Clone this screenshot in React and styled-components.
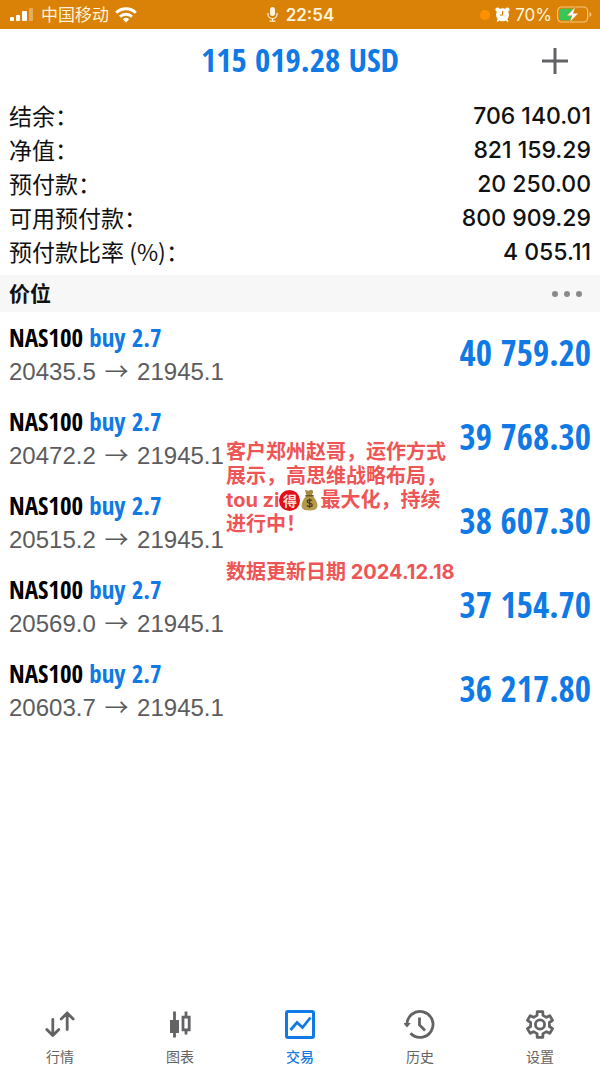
import React from "react";
import styled, { createGlobalStyle } from "styled-components";

const BLUE = "#0f7ae5";
const GREY = "#636366";
const CJK = `"Noto Sans CJK SC", sans-serif`;
const CONDENSED = `"Open Sans Condensed", "Roboto Condensed", sans-serif`;

const Global = createGlobalStyle`
  * { box-sizing: border-box; }
  body { margin: 0; background: #fff; color: #111; font-family: Inter, ${CJK}; }
  h1, h2, p, dl, dd, ul { margin: 0; padding: 0; }
  button { border: 0; padding: 0; background: none; cursor: pointer; }
  svg { display: block; flex: none; }
`;

const Page = styled.div`
  display: flex;
  flex-direction: column;
  min-height: 100vh;
`;

const StatusBar = styled.header`
  display: grid;
  grid-template-columns: 1fr auto 1fr;
  align-items: center;
  height: 29px;
  padding: 0 8px 0 9px;
  background: #d98207;
  color: #fff3dc;
`;

const StatusGroup = styled.div`
  display: flex;
  align-items: center;
  justify-content: ${(p) => p.$align || "flex-start"};
  gap: ${(p) => p.$gap || 6}px;
  font: ${(p) => (p.$strong ? 600 : 400)} 17px/24px Inter, ${CJK};
`;

const RecordingDot = styled.span`
  width: 10px;
  height: 10px;
  border-radius: 50%;
  background: #ff9100;
`;

const TitleBar = styled.div`
  display: grid;
  grid-template-columns: 1fr auto 1fr;
  align-items: center;
  height: 63px;
  padding: 0 31px;
`;

const Profit = styled.h1`
  grid-column: 2;
  padding-bottom: 2px;
  color: ${BLUE};
  font: 600 33px/40px ${CONDENSED};
  white-space: nowrap;
`;

const AddButton = styled.button`
  justify-self: end;
  color: ${GREY};
`;

const Summary = styled.dl`
  display: flex;
  flex-direction: column;
  padding: 6px 9px 7px;
`;

const SummaryRow = styled.div`
  display: flex;
  align-items: flex-start;
  justify-content: space-between;
  height: 34px;
`;

const SummaryLabel = styled.dt`
  font: 400 23px/34px ${CJK};
`;

const SummaryValue = styled.dd`
  font: 500 23px/36px Inter, sans-serif;
`;

const SectionBar = styled.div`
  display: flex;
  align-items: flex-start;
  justify-content: space-between;
  height: 37px;
  padding: 0 18px 0 9px;
  background: #f7f7f7;
`;

const SectionTitle = styled.h2`
  font: 700 21px/34px ${CJK};
`;

const MoreButton = styled.button`
  align-self: center;
  color: #8b8b8e;
`;

const Positions = styled.main`
  position: relative;
  flex: 1;
`;

const PositionList = styled.ul`
  list-style: none;
`;

const PositionRow = styled.li`
  display: flex;
  align-items: center;
  justify-content: space-between;
  height: 84px;
  padding: 0 9px;
`;

const Symbol = styled.p`
  padding-top: 2px;
  color: #000;
  font: 700 25px/34px ${CONDENSED};
`;

const Side = styled.span`
  color: ${BLUE};
  font-weight: 600;
`;

const Prices = styled.p`
  color: #5c5c5e;
  font: 400 24px/36px "Liberation Sans", sans-serif;
`;

const Arrow = styled.span`
  margin: 0 2px;
  font-family: ${CJK};
  line-height: 24px;
`;

const Gain = styled.span`
  padding-bottom: 2px;
  color: ${BLUE};
  font: 600 35px/40px ${CONDENSED};
`;

const Note = styled.aside`
  position: absolute;
  top: 128px;
  left: 226px;
  color: #ee5555;
  font: 700 20px/24px Inter, ${CJK};
  white-space: nowrap;
`;

const NoteLine = styled.p`
  display: flex;
  align-items: center;
  height: 24px;
`;

const NoteDate = styled(NoteLine)`
  margin-top: 24px;
`;

const Seal = styled.span`
  width: 21px;
  height: 21px;
  border-radius: 50%;
  background: #e00f18;
  color: #ffdcd2;
  font: 700 14px/20px ${CJK};
  text-align: center;
`;

const TabBar = styled.nav`
  display: grid;
  grid-template-columns: repeat(5, 1fr);
  padding: 8px 0 0;
  height: 68px;
`;

const Tab = styled.button`
  display: flex;
  flex-direction: column;
  align-items: center;
  gap: 5px;
  color: ${(p) => (p.$active ? BLUE : GREY)};
  font: ${(p) => (p.$active ? 500 : 400)} 14px/22px ${CJK};
`;

const SignalIcon = () => (
  <svg width="26" height="14" viewBox="0 0 26 14" fill="#fff">
    <rect x="1" y="9" width="4" height="4" rx="1" />
    <rect x="7" y="7" width="4" height="6" rx="1" />
    <rect x="13" y="3" width="5" height="10" rx="1" />
    <rect x="20" y="0" width="4" height="13" rx="1" opacity=".35" />
  </svg>
);

const WifiIcon = () => (
  <svg width="22" height="16" viewBox="0 0 22 16" fill="none" stroke="#fff" strokeWidth="3">
    <path d="M1.200 5.800a14 14 0 0 1 19.600 0" />
    <path d="M5 9.800a8.600 8.600 0 0 1 12 0" />
    <path d="M11 15.600 7.800 12.300a4.700 4.700 0 0 1 6.400 0z" fill="#fff" stroke="none" />
  </svg>
);

const MicIcon = () => (
  <svg width="11" height="15" viewBox="0 0 11 15" fill="none" stroke="#fff3dc" strokeWidth="1.200">
    <rect x="3" y="0" width="5" height="9" rx="2.500" fill="#fff3dc" stroke="none" />
    <path d="M1 6v1.500a4.500 4 0 0 0 9 0V6M5.500 11.500v2.500M2.500 14.200h6" />
  </svg>
);

const AlarmIcon = () => (
  <svg width="15" height="15" viewBox="0 0 15 15" fill="#fff">
    <circle cx="7.500" cy="7.800" r="6.500" />
    <circle cx="2.600" cy="2.600" r="2.200" />
    <circle cx="12.400" cy="2.600" r="2.200" />
    <path d="M2.200 14.500 4 12M12.800 14.500 11 12" stroke="#fff" strokeWidth="1.800" />
    <path d="M7.600 4v4H4.800" fill="none" stroke="#d98207" strokeWidth="1.200" />
  </svg>
);

const BatteryIcon = () => (
  <svg width="35" height="17" viewBox="0 0 35 17">
    <rect x=".6" y="1" width="30" height="15" rx="4" fill="none" stroke="#f5c67c" strokeWidth="1.200" />
    <path d="M32.500 6v5q2-.7 2-2.500t-2-2.500z" fill="#f5c67c" />
    <path d="M4.500 2.800H17v11.400H4.500a2.200 2.200 0 0 1-2.200-2.200V5a2.200 2.200 0 0 1 2.200-2.200z" fill="#35c759" />
    <path d="M18.500.8 9.800 9.800h5l-2.300 6.600 9-9.200h-5.100z" fill="#fff" stroke="#d98207" strokeWidth=".6" />
  </svg>
);

const PlusIcon = () => (
  <svg width="28" height="28" viewBox="0 0 28 28" stroke="currentColor" strokeWidth="3">
    <path d="M14 1v26M1 14h26" />
  </svg>
);

const MoreIcon = () => (
  <svg width="30" height="8" viewBox="0 0 30 8" fill="currentColor">
    <circle cx="3" cy="4" r="3" />
    <circle cx="15" cy="4" r="3" />
    <circle cx="27" cy="4" r="3" />
  </svg>
);

const MoneyBag = () => (
  <svg width="20" height="22" viewBox="2 0 20 22">
    <path d="M8.500 6.500C6 9.500 3.500 13 3.500 16.500c0 3.500 2.500 5 8 5s8-1.500 8-5c0-3.500-2.500-7-5-10z" fill="#b59a4b" />
    <path d="M7 1.500c1.500-.8 2.500.3 3.500.2s2-1.600 3.200-.8 2 1.400 1.300 2.600l-1.300 3H8.600z" fill="#a58b3e" />
    <path d="M8 6.700h7" stroke="#6f5727" strokeWidth="1.600" strokeLinecap="round" />
    <path d="M14 11.800c-.5-1.200-4.800-1.500-4.800.6 0 2.200 5 1.200 5 3.500 0 2.100-4.700 2-5.300.3M11.600 9.500v9.500" fill="none" stroke="#493b1d" strokeWidth="1.300" />
  </svg>
);

const TabIcon = ({ children }) => (
  <svg width="32" height="32" viewBox="0 0 32 32" fill="none" stroke="currentColor" strokeWidth="2.800">
    {children}
  </svg>
);

const QuotesIcon = () => (
  <TabIcon>
    <g strokeLinecap="round" strokeLinejoin="round">
      <path d="M8.800 11.500V27M2.800 21.500 8.800 27.500l6-6M23.200 21.500V5M17.200 11l6-6 6 6" />
    </g>
  </TabIcon>
);

const ChartIcon = () => (
  <TabIcon>
    <path d="M10.500 3.500v26M22 3.500V8M22 22v4.500" />
    <path d="M6 12h9v13H6z" fill="currentColor" stroke="none" />
    <path d="M19 9.200h6.200v12.600H19z" />
  </TabIcon>
);

const TradeIcon = () => (
  <TabIcon>
    <rect x="2.500" y="3.500" width="27" height="26" rx="1.500" strokeWidth="3" />
    <path d="m6.500 22 6.500-7.500 5.500 5 8-10" />
  </TabIcon>
);

const HistoryIcon = () => (
  <TabIcon>
    <path d="M3 17A13 13 0 1 1 6.500 25.300" />
    <path d="M-.8 15h7.600L3 19.500z" fill="currentColor" stroke="none" />
    <path d="M15.500 9.500v7.500l5.500 5.500" />
  </TabIcon>
);

const GEAR = Array.from({ length: 6 }, (_, i) => {
  const at = (r, deg) => {
    const a = ((i * 60 + deg - 90) * Math.PI) / 180;
    return `${(16 + r * Math.cos(a)).toFixed(2)} ${(16.5 + r * Math.sin(a)).toFixed(2)}`;
  };
  return `${i ? "L" : "M"}${at(9.6, -18)}L${at(13.2, -12)}L${at(13.2, 12)}L${at(9.6, 18)}`;
}).join("") + "z";

const SettingsIcon = () => (
  <TabIcon>
    <path d={GEAR} strokeLinejoin="round" />
    <circle cx="16" cy="16.500" r="4.600" />
  </TabIcon>
);

const summary = [
  ["结余：", "706 140.01"],
  ["净值：", "821 159.29"],
  ["预付款：", "20 250.00"],
  ["可用预付款：", "800 909.29"],
  ["预付款比率 (%)：", "4 055.11"],
];

const positions = [
  ["20435.5", "40 759.20"],
  ["20472.2", "39 768.30"],
  ["20515.2", "38 607.30"],
  ["20569.0", "37 154.70"],
  ["20603.7", "36 217.80"],
];

const tabs = [
  ["行情", QuotesIcon],
  ["图表", ChartIcon],
  ["交易", TradeIcon],
  ["历史", HistoryIcon],
  ["设置", SettingsIcon],
];

export default function App() {
  return (
    <Page>
      <Global />
      <StatusBar>
        <StatusGroup>
          <SignalIcon />
          <span>中国移动</span>
          <WifiIcon />
        </StatusGroup>
        <StatusGroup $strong $gap={8}>
          <MicIcon />
          <span>22:54</span>
        </StatusGroup>
        <StatusGroup $align="flex-end" $gap={5}>
          <RecordingDot />
          <AlarmIcon />
          <span>70%</span>
          <BatteryIcon />
        </StatusGroup>
      </StatusBar>
      <TitleBar>
        <Profit>115 019.28 USD</Profit>
        <AddButton aria-label="新订单">
          <PlusIcon />
        </AddButton>
      </TitleBar>
      <Summary>
        {summary.map(([label, value]) => (
          <SummaryRow key={label}>
            <SummaryLabel>{label}</SummaryLabel>
            <SummaryValue>{value}</SummaryValue>
          </SummaryRow>
        ))}
      </Summary>
      <SectionBar>
        <SectionTitle>价位</SectionTitle>
        <MoreButton aria-label="更多">
          <MoreIcon />
        </MoreButton>
      </SectionBar>
      <Positions>
        <PositionList>
          {positions.map(([open, gain]) => (
            <PositionRow key={open}>
              <div>
                <Symbol>
                  NAS100 <Side>buy 2.7</Side>
                </Symbol>
                <Prices>
                  {open} <Arrow>→</Arrow> 21945.1
                </Prices>
              </div>
              <Gain>{gain}</Gain>
            </PositionRow>
          ))}
        </PositionList>
        <Note>
          <NoteLine>客户郑州赵哥，运作方式</NoteLine>
          <NoteLine>展示，高思维战略布局，</NoteLine>
          <NoteLine>
            tou zi<Seal>得</Seal>
            <MoneyBag />
            最大化，持续
          </NoteLine>
          <NoteLine>进行中！</NoteLine>
          <NoteDate>数据更新日期 2024.12.18</NoteDate>
        </Note>
      </Positions>
      <TabBar>
        {tabs.map(([label, Icon]) => (
          <Tab key={label} $active={label === "交易"}>
            <Icon />
            {label}
          </Tab>
        ))}
      </TabBar>
    </Page>
  );
}
